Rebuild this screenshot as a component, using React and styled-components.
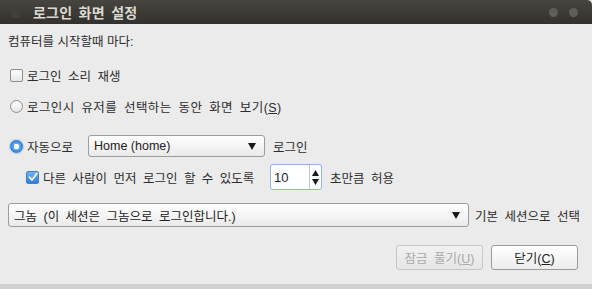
import React from 'react';
import styled, { createGlobalStyle } from 'styled-components';

const GlobalStyle = createGlobalStyle`
  html, body {
    margin: 0;
    padding: 0;
    background: #e6e6e6;
  }
  body {
    font-family: "Liberation Sans", "Noto Sans CJK KR", sans-serif;
    font-size: 12.5px;
    color: #2e2e2e;
  }
`;

const Window = styled.div`
  width: 592px;
  height: 289px;
  display: flex;
  flex-direction: column;
  overflow: hidden;
`;

const TitleBar = styled.div`
  height: 24px;
  flex: none;
  display: flex;
  align-items: center;
  padding: 0 0 0 10px;
  background: linear-gradient(#46453f, #32312d);
  border-radius: 0 5px 0 0;
  box-sizing: border-box;
`;

const Dot = styled.span`
  width: ${({ $dim }) => ($dim ? 11 : 9)}px;
  height: ${({ $dim }) => ($dim ? 11 : 9)}px;
  border-radius: 50%;
  background: ${({ $dim }) => ($dim ? '#403f3b' : '#5f5e5a')};
  flex: none;
`;

const Title = styled.span`
  margin-left: 12px;
  font-family: "Noto Sans CJK KR", sans-serif;
  font-weight: 700;
  font-size: 14px;
  letter-spacing: 0.2px;
  word-spacing: 3px;
  color: #dcd9d2;
  flex: 1;
`;

const TitleControls = styled.div`
  display: flex;
  gap: 11px;
  margin-right: 14px;
`;

const Body = styled.div`
  flex: 1;
  background: #ebebeb;
  border-bottom: 5px solid #d0d0d0;
  padding: 0 8px;
  display: flex;
  flex-direction: column;
`;

const Row = styled.div`
  display: flex;
  align-items: center;
  height: ${({ $h }) => $h}px;
  margin-top: ${({ $top }) => $top}px;
  padding-left: ${({ $indent = 0 }) => $indent}px;
`;

const Label = styled.span`
  font-family: "Liberation Sans", "Noto Sans CJK KR", sans-serif;
  font-size: 12.5px;
  word-spacing: ${({ $ws = 3 }) => $ws}px;
  letter-spacing: ${({ $ls = 0 }) => $ls}px;
  color: #2d2d2d;
  white-space: nowrap;
  margin-left: ${({ $ml = 0 }) => $ml}px;
  width: ${({ $w }) => ($w ? `${$w}px` : 'auto')};
  flex: none;
`;

const Mnemonic = styled.u`
  text-underline-offset: 1px;
`;

const CheckBox = styled.span`
  width: 11px;
  height: 11px;
  margin-left: 2px;
  border-radius: 2px;
  border: 1px solid ${({ $checked }) => ($checked ? '#3d7fd0' : '#8e8e8e')};
  background: ${({ $checked }) =>
    $checked ? 'linear-gradient(#6eb2f3, #2d7fdc)' : 'linear-gradient(#ffffff, #e6e6e6)'};
  display: inline-flex;
  align-items: center;
  justify-content: center;
  flex: none;
`;

const Radio = styled.span`
  width: 11px;
  height: 11px;
  margin-left: 2px;
  border-radius: 50%;
  border: 1px solid ${({ $checked }) => ($checked ? '#2c7ad6' : '#8e8e8e')};
  background: ${({ $checked }) =>
    $checked
      ? 'radial-gradient(circle, #ffffff 0 2.5px, #64aef5 3px, #2b7ee0 6px)'
      : 'linear-gradient(#ffffff, #e4e4e4)'};
  box-shadow: ${({ $checked }) => ($checked ? '0 0 1px 1px rgba(80, 150, 230, 0.35)' : 'none')};
  flex: none;
`;

const Combo = styled.div`
  width: ${({ $w }) => $w}px;
  height: ${({ $h }) => $h}px;
  box-sizing: border-box;
  border: 1px solid #9c9c9c;
  border-radius: 3px;
  background: linear-gradient(#ffffff, #f3f3f3 60%, #e9e9e9);
  display: flex;
  align-items: center;
  padding: 0 8px 0 5px;
  flex: none;
`;

const ComboText = styled.span`
  flex: 1;
  font-family: "Liberation Sans", "Noto Sans CJK KR", sans-serif;
  font-size: 12.5px;
  word-spacing: ${({ $ws = 0 }) => $ws}px;
  color: #222;
  white-space: nowrap;
`;

const Spin = styled.div`
  width: 52px;
  height: 26px;
  box-sizing: border-box;
  border: 1px solid #8fb4df;
  border-radius: 3px;
  background: #ffffff;
  display: flex;
  flex: none;
`;

const SpinValue = styled.span`
  flex: 1;
  display: flex;
  align-items: center;
  padding-left: 3px;
  font-size: 13px;
  color: #1e1e1e;
`;

const SpinArrows = styled.span`
  width: 11px;
  border-left: 1px solid #c9c9c9;
  display: flex;
  flex-direction: column;
  align-items: center;
  justify-content: center;
  gap: 3px;
`;

const ButtonRow = styled.div`
  display: flex;
  justify-content: flex-end;
  gap: 8px;
  margin-top: 18px;
  padding-right: 6px;
`;

const Button = styled.button`
  width: 87px;
  height: 25px;
  box-sizing: border-box;
  border-radius: 3px;
  border: 1px solid ${({ disabled }) => (disabled ? '#c6c6c6' : '#9a9a9a')};
  background: ${({ disabled }) =>
    disabled ? 'linear-gradient(#f1f1f1, #e6e6e6)' : 'linear-gradient(#ffffff, #ececec)'};
  color: ${({ disabled }) => (disabled ? '#a9a9a9' : '#222')};
  font-family: "Liberation Sans", "Noto Sans CJK KR", sans-serif;
  font-size: 12.5px;
  word-spacing: 3px;
  padding: 0;
`;

const Check = () => (
  <svg width="10" height="10" viewBox="0 0 10 10">
    <path d="M1.5 5.2 L4 8 L8.8 1.5" fill="none" stroke="#fff" strokeWidth="1.8" strokeLinecap="round" strokeLinejoin="round" />
  </svg>
);

const Down = () => (
  <svg width="8" height="7" viewBox="0 0 8 7">
    <path d="M0 0 H8 L4 7 Z" fill="#1a1a1a" />
  </svg>
);

const Up = () => (
  <svg width="7" height="6" viewBox="0 0 7 6">
    <path d="M0 6 H7 L3.5 0 Z" fill="#1a1a1a" />
  </svg>
);

const SmallDown = () => (
  <svg width="7" height="6" viewBox="0 0 7 6">
    <path d="M0 0 H7 L3.5 6 Z" fill="#1a1a1a" />
  </svg>
);

export default function App() {
  return (
    <>
      <GlobalStyle />
      <Window>
        <TitleBar>
          <Dot $dim />
          <Title>로그인 화면 설정</Title>
          <TitleControls>
            <Dot />
            <Dot />
          </TitleControls>
        </TitleBar>
        <Body>
          <Row $h={20} $top={6}>
            <Label $ws={0}>컴퓨터를 시작할때 마다:</Label>
          </Row>
          <Row $h={20} $top={15}>
            <CheckBox />
            <Label $ml={4}>로그인 소리 재생</Label>
          </Row>
          <Row $h={20} $top={11}>
            <Radio />
            <Label $ml={4} $ls={0.4}>
              로그인시 유저를 선택하는 동안 화면 보기(<Mnemonic>S</Mnemonic>)
            </Label>
          </Row>
          <Row $h={22} $top={19}>
            <Radio $checked />
            <Label $ml={4} $w={61}>자동으로</Label>
            <Combo $w={177} $h={22}>
              <ComboText>Home (home)</ComboText>
              <Down />
            </Combo>
            <Label $ml={8}>로그인</Label>
          </Row>
          <Row $h={26} $top={7} $indent={16}>
            <CheckBox $checked>
              <Check />
            </CheckBox>
            <Label $ml={4} $w={227}>다른 사람이 먼저 로그인 할 수 있도록</Label>
            <Spin>
              <SpinValue>10</SpinValue>
              <SpinArrows>
                <Up />
                <SmallDown />
              </SpinArrows>
            </Spin>
            <Label $ml={8}>초만큼 허용</Label>
          </Row>
          <Row $h={24} $top={13}>
            <Combo $w={461} $h={24}>
              <ComboText $ws={3}>그놈 (이 세션은 그놈으로 로그인합니다.)</ComboText>
              <Down />
            </Combo>
            <Label $ml={6}>기본 세션으로 선택</Label>
          </Row>
          <ButtonRow>
            <Button disabled>
              잠금 풀기(<Mnemonic>U</Mnemonic>)
            </Button>
            <Button>
              닫기(<Mnemonic>C</Mnemonic>)
            </Button>
          </ButtonRow>
        </Body>
      </Window>
    </>
  );
}
